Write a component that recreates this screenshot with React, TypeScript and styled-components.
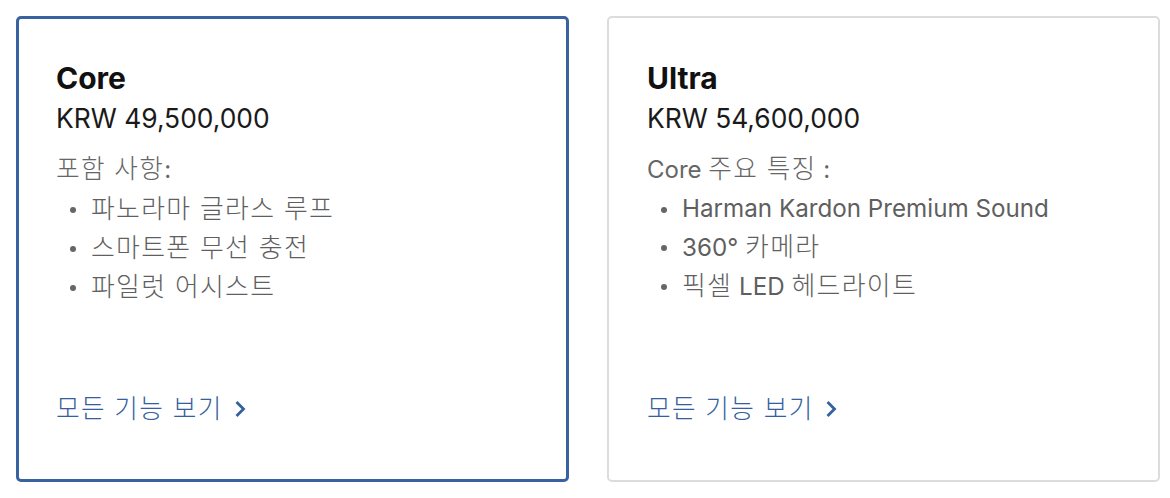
import React from "react";
import styled, { createGlobalStyle } from "styled-components";

const Global = createGlobalStyle`
  html, body { margin: 0; padding: 0; background: #fff; }
  body { font-family: Inter, "Noto Sans CJK KR", sans-serif; }
`;

const Grid = styled.div`
  display: grid;
  grid-template-columns: 553px 553px;
  column-gap: 38px;
  padding: 16px 10px 16px 16px;
`;

const Card = styled.div<{ $selected?: boolean }>`
  box-sizing: border-box;
  height: 466px;
  display: flex;
  flex-direction: column;
  border: ${(p) => (p.$selected ? "3px solid #3962a0" : "2px solid #dcdcdc")};
  border-radius: 5px;
  padding: ${(p) => (p.$selected ? "40px 37px 52px" : "41px 38px 53px")};
`;

const Title = styled.h3`
  margin: 0;
  font-size: 30px;
  line-height: 38px;
  font-weight: 700;
  color: #111;
`;

const Price = styled.div`
  font-size: 26.4px;
  line-height: 42px;
  color: #1a1a1a;
`;

const Label = styled.div`
  margin-top: 12px;
  font-size: 24px;
  line-height: 36px;
  color: #666;
`;

const List = styled.ul`
  margin: 2px 0 0;
  padding: 0 0 0 14px;
  list-style: none;
`;

const Item = styled.li`
  position: relative;
  font-size: 24.2px;
  line-height: 38px;
  color: #5f5f5f;
  padding-left: 21px;
  &::before {
    content: "";
    position: absolute;
    left: 0;
    top: 17px;
    width: 6px;
    height: 6px;
    border-radius: 50%;
    background: #666;
  }
`;

const Ko = styled.span`
  font-size: 1.07em;
  font-weight: 300;
  letter-spacing: 1.3px;
`;

const Link = styled.a`
  margin-top: auto;
  display: inline-flex;
  align-items: center;
  gap: 12px;
  font-size: 24px;
  line-height: 36px;
  color: #36609d;
  text-decoration: none;
`;

const Chevron = () => (
  <svg width="11" height="16" viewBox="0 0 11 16" fill="none">
    <path d="M2.5 2l6 6-6 6" stroke="#36609d" strokeWidth="2.8" strokeLinecap="square" />
  </svg>
);

const Text = ({ value }: { value: string }) => {
  const parts = value.split(/([\uAC00-\uD7A3][\uAC00-\uD7A3 ]*[\uAC00-\uD7A3]|[\uAC00-\uD7A3])/g);
  return (
    <>
      {parts.map((s, i) =>
        /[\uAC00-\uD7A3]/.test(s) ? <Ko key={i}>{s}</Ko> : <React.Fragment key={i}>{s}</React.Fragment>
      )}
    </>
  );
};

const plans = [
  {
    name: "Core",
    price: "KRW 49,500,000",
    label: "포함 사항:",
    items: ["파노라마 글라스 루프", "스마트폰 무선 충전", "파일럿 어시스트"],
    selected: true,
  },
  {
    name: "Ultra",
    price: "KRW 54,600,000",
    label: "Core 주요 특징 :",
    items: ["Harman Kardon Premium Sound", "360° 카메라", "픽셀 LED 헤드라이트"],
    selected: false,
  },
];

export default function App() {
  return (
    <>
      <Global />
      <Grid>
        {plans.map((p) => (
          <Card key={p.name} $selected={p.selected}>
            <Title>{p.name}</Title>
            <Price>{p.price}</Price>
            <Label>
              <Text value={p.label} />
            </Label>
            <List>
              {p.items.map((i) => (
                <Item key={i}>
                  <Text value={i} />
                </Item>
              ))}
            </List>
            <Link href="#">
              <Ko>모든 기능 보기</Ko>
              <Chevron />
            </Link>
          </Card>
        ))}
      </Grid>
    </>
  );
}
